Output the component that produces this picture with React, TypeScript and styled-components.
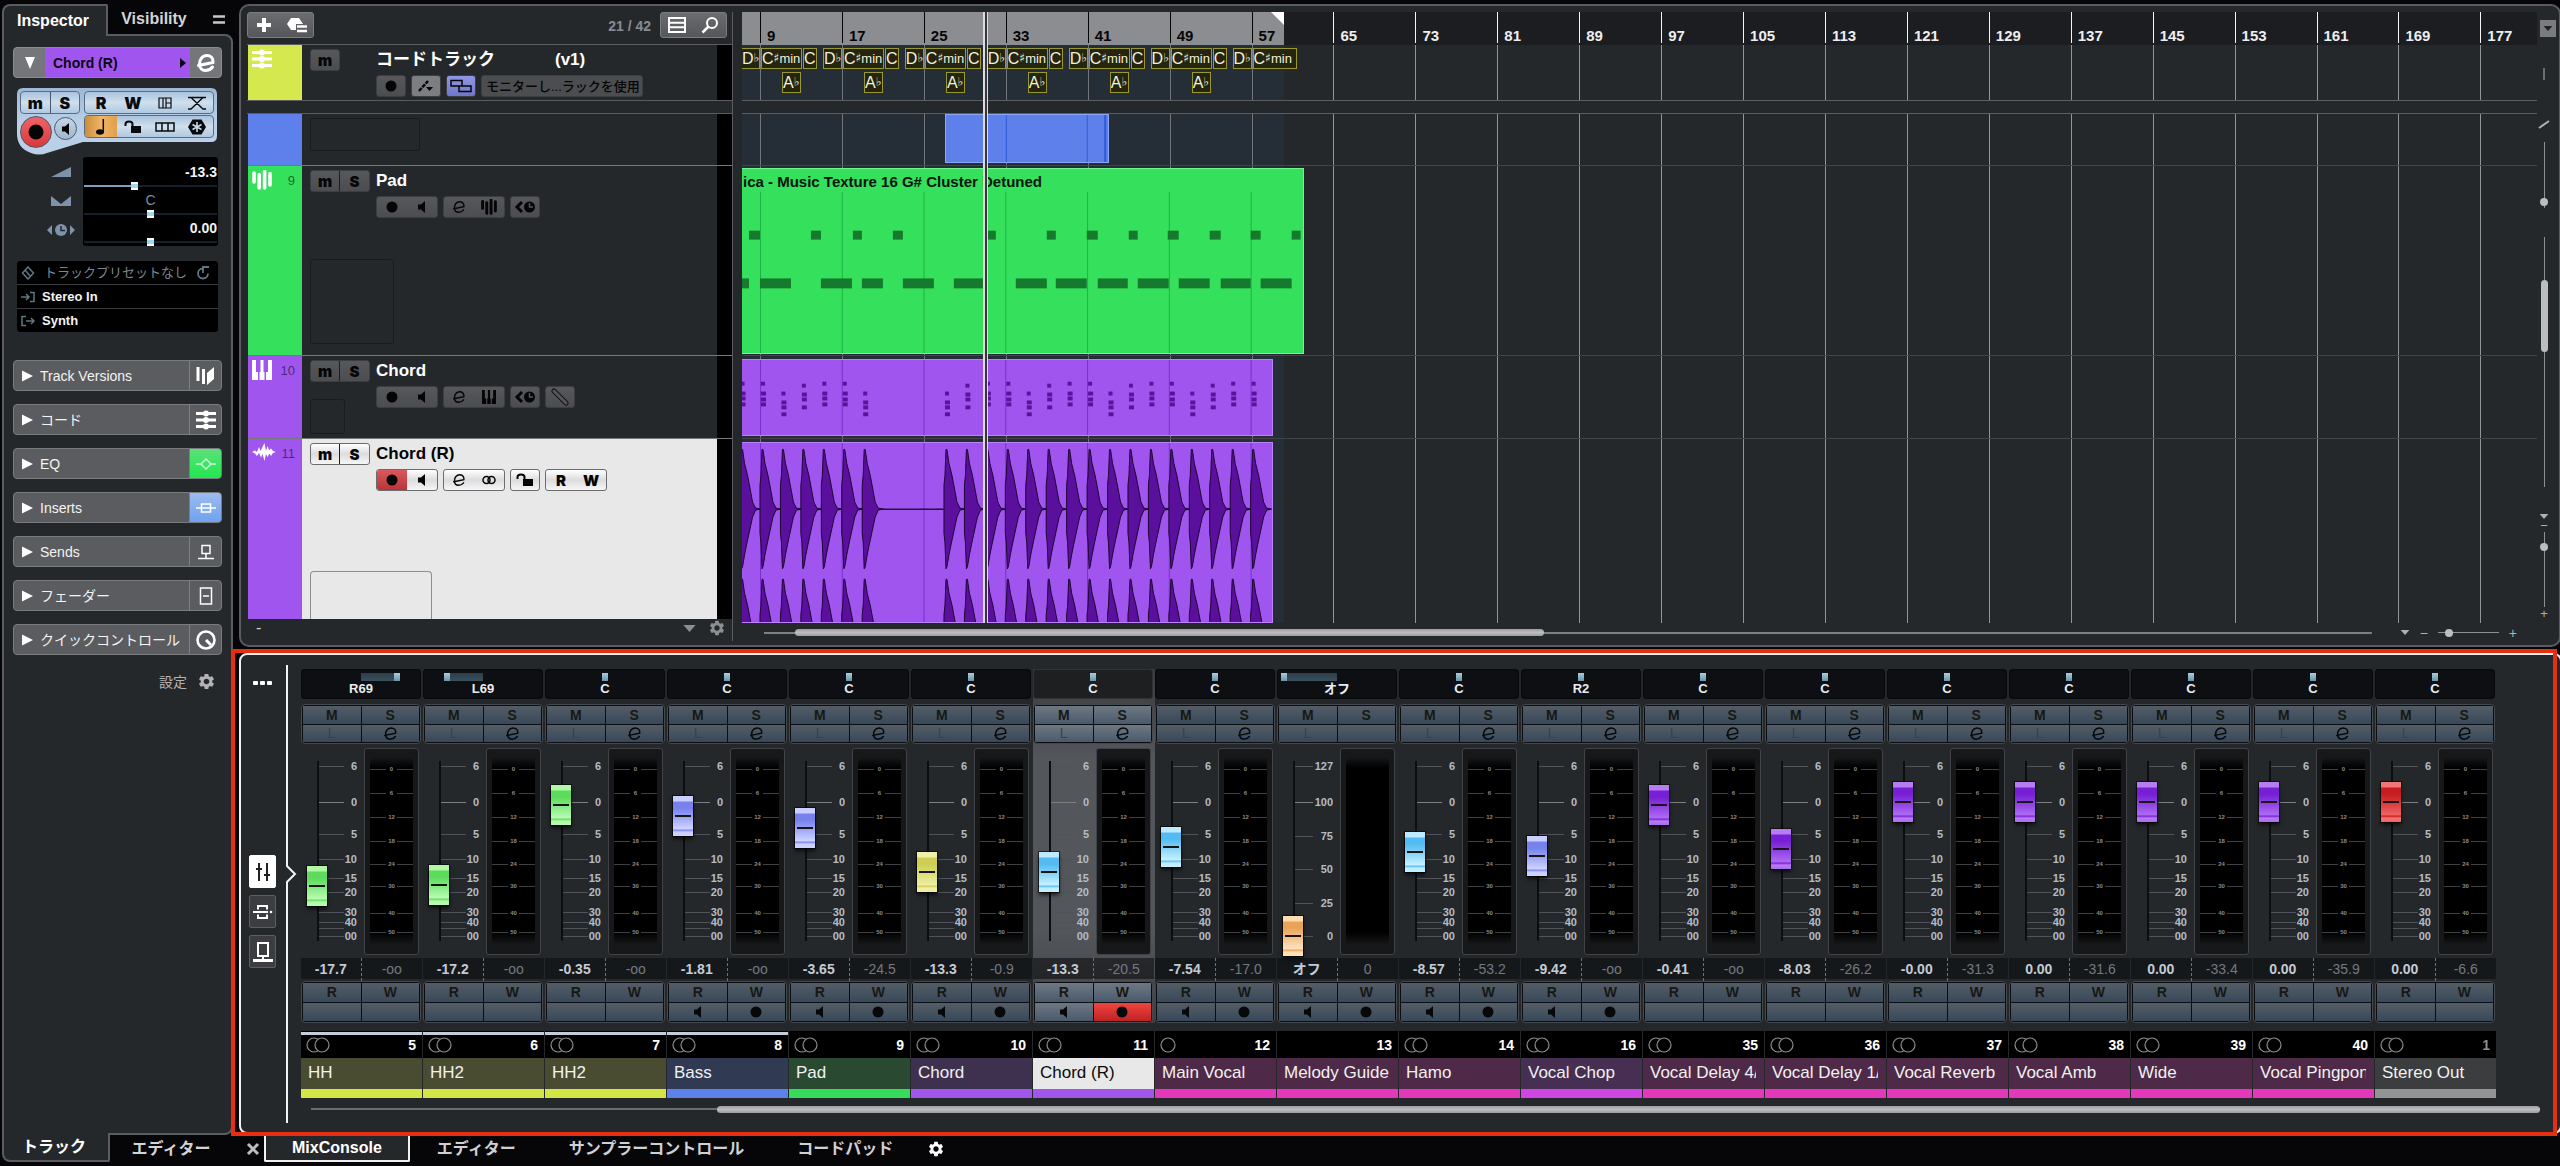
import React, { Fragment, ReactNode } from "react";
import styled, { createGlobalStyle, css } from "styled-components";
import { MdSettings } from "react-icons/md";

const SANS = '"Liberation Sans", "Noto Sans CJK JP", Arial, sans-serif';
const PANEL = "#25282b";
const EDGE = "#5b5c61";

const GlobalStyle = createGlobalStyle`
  * { box-sizing: border-box; }
  body { margin: 0; background: #060608; overflow: hidden; font-family: ${SANS}; color: #fff; }
  button, select, input { font: inherit; color: inherit; margin: 0; padding: 0; border: 0; background: none; }
  svg { display: block; flex: none; }
`;

/* ---------- icons ---------- */

type IconProps = { w?: number; h?: number; box?: string; children: ReactNode };
const Icon = ({ w = 20, h = 20, box, children }: IconProps) => (
  <svg width={w} height={h} viewBox={box ?? `0 0 ${w} ${h}`} aria-hidden="true">{children}</svg>
);
const EditIcon = ({ size = 16, weight = 2 }: { size?: number; weight?: number }) => (
  <Icon w={size} h={size} box="0 0 20 20">
    <path d="M2.5 12.5 L17 9.5 C17.5 5 14.5 2.5 11 2.5 C6.5 2.5 3.5 6.5 3.5 11 C3.5 15 6 17.5 9.5 17.5 C12.5 17.5 15 16 16.5 14" fill="none" stroke="currentColor" strokeWidth={weight} strokeLinecap="round" />
  </Icon>
);
const Dot = () => <Icon w={12} h={12}><circle cx="6" cy="6" r="5.5" fill="currentColor" /></Icon>;
const Speaker = () => (
  <Icon w={12} h={14}><path d="M2 4.5H5L9 1V13L5 9.5H2Z" fill="currentColor" /></Icon>
);
const Gear = ({ size = 18 }: { size?: number }) => <MdSettings size={size} aria-hidden="true" />;
const Keys = ({ size = 18 }: { size?: number }) => (
  <Icon w={size} h={size} box="0 0 20 20">
    <path d="M0 0H4V12H6V20H0ZM7.500 20V12H8.500V0H11.500V12H12.500V20ZM14 20V12H16V0H20V20Z" fill="currentColor" />
  </Icon>
);
const Bars = ({ size = 20 }: { size?: number }) => (
  <Icon w={size} h={size} box="0 0 20 20">
    <path d="M2 3V12M7.200 4.500V18M12.600 1.500V18M18 3.500V15" stroke="currentColor" strokeWidth="3.600" strokeLinecap="round" />
  </Icon>
);
const Padlock = () => (
  <Icon w={18} h={14}>
    <path d="M7 6H17V13H7Z" fill="currentColor" />
    <path d="M1.500 6V4C1.500 0.500 8.500 0.500 8.500 4V7" fill="none" stroke="currentColor" strokeWidth="2" />
  </Icon>
);
const Delay = () => (
  <Icon w={22} h={14}>
    <path d="M8 2L3 7L8 12" fill="none" stroke="currentColor" strokeWidth="3" />
    <circle cx="15.500" cy="7" r="5.500" fill="currentColor" />
    <path d="M15.500 3V7H19" fill="none" stroke="#56575b" strokeWidth="1.500" />
  </Icon>
);
const Linked = () => (
  <Icon w={14} h={10}>
    <circle cx="4.500" cy="5" r="3.500" fill="none" stroke="currentColor" strokeWidth="1.500" />
    <circle cx="9.500" cy="5" r="3.500" fill="none" stroke="currentColor" strokeWidth="1.500" />
  </Icon>
);
const Slide = () => (
  <Icon w={18} h={18}>
    <path d="M3 3L15 15" stroke="#111" strokeWidth="5" strokeLinecap="round" />
    <path d="M3 3L15 15" stroke="#56575b" strokeWidth="3" strokeLinecap="round" />
  </Icon>
);
const ChordGlyph = () => (
  <Icon w={20} h={20}>
    <path d="M0 3.500H20M0 10H20M0 16.500H20" stroke="#fff" strokeWidth="3" />
    <circle cx="10" cy="3.500" r="3" fill="#fff" /><circle cx="10" cy="10" r="3" fill="#fff" /><circle cx="10" cy="16.500" r="3" fill="#fff" />
  </Icon>
);
const WaveGlyph = () => (
  <Icon w={24} h={18}>
    <path d="M0 9L3 7.500L5 9L7 4L8.500 8L10 5L12.500 0L14 8L15.500 3L17 7L19 5.500L21 8L24 9L21 10L19 13L17.500 10.500L15.500 14L14 11L12.500 18L10.500 11L9 14.500L7 10L5 13L3 10.500Z" fill="#fff" />
  </Icon>
);
const Down = ({ w = 14, h = 8 }: { w?: number; h?: number }) => (
  <Icon w={w} h={h} box="0 0 14 8"><path d="M0 0H14L7 8Z" fill="currentColor" /></Icon>
);
const StereoGlyph = ({ mono }: { mono?: boolean }) => (
  <Icon w={24} h={16}>
    <circle cx="8" cy="8" r="7" fill="none" stroke="currentColor" strokeWidth="1.200" />
    {!mono && <circle cx="16" cy="8" r="7" fill="#000" stroke="currentColor" strokeWidth="1.200" />}
  </Icon>
);

/* ---------- page ---------- */

const Page = styled.div`
  display: flex;
  min-height: 100vh;
  overflow: hidden;
  line-height: 1;
`;

/* ---------- inspector ---------- */

const Inspector = styled.aside`
  display: flex;
  flex-direction: column;
  flex: none;
  width: 233px;
  padding: 4px 0 4px 2px;
`;
const TabLine = styled.div<{ $bottom?: boolean }>`
  display: flex;
  height: ${p => (p.$bottom ? 27 : 30)}px;
`;
const SideTab = styled.button<{ $active?: boolean; $bottom?: boolean; $w: number }>`
  width: ${p => p.$w}px;
  font-size: 16px;
  font-weight: 700;
  color: #d4d4d6;
  white-space: nowrap;
  ${p => p.$active && css`
    position: relative;
    padding-right: 4px;
    color: #fff;
    background: ${PANEL};
    border: 2px solid ${EDGE};
    ${p.$bottom
      ? "border-top: 0; margin-top: -2px; border-radius: 0 0 2px 8px;"
      : "border-bottom: 0; margin-bottom: -2px; border-radius: 8px 2px 0 0;"}
  `}
`;
const MenuButton = styled.button`
  display: grid;
  place-items: center;
  width: 24px;
  margin-left: 7px;
  color: #c8c8ca;
`;
const InspectorBody = styled.div`
  display: flex;
  flex-direction: column;
  flex: 1;
  padding: 11px 9px 0;
  background: ${PANEL};
  border: 2px solid ${EDGE};
  border-radius: 0 8px 8px 0;
`;
const TrackHeader = styled.div`
  display: flex;
  height: 31px;
  border: 1px solid #8b8c8f;
  border-radius: 4px;
  overflow: hidden;
  background: #757679;
`;
const HeaderCell = styled.button`
  display: grid;
  place-items: center;
  width: 31px;
`;
const HeaderName = styled.button`
  display: flex;
  flex: 1;
  align-items: center;
  justify-content: space-between;
  padding: 0 4px 0 8px;
  background: #a056ee;
  color: #0b0412;
  font-size: 14px;
  font-weight: 700;
`;
const ControlPad = styled.div`
  display: grid;
  grid-template-columns: 60px 130px;
  grid-template-rows: 23px 23px;
  gap: 1px 4px;
  align-content: start;
  height: 67px;
  margin: 10px 4px 0;
  padding: 3px;
  background: linear-gradient(#9db8d6, #b9d0e8 35px);
  clip-path: path("M6 0H194Q200 0 200 6V48Q200 54 194 54H66L30 65Q22 68 14 65Q0 60 0 46V6Q0 0 6 0Z");
`;
const PadGroup = styled.div`
  display: flex;
  border: 1px solid #5c6c80;
  border-radius: 4px;
  overflow: hidden;
  background: linear-gradient(#a9c2dc, #cfdfee 50%, #b0c8e0);
`;
const PadKey = styled.button<{ $lit?: boolean; $rule?: boolean }>`
  display: grid;
  flex: 1;
  place-items: center;
  color: #080a0d;
  font: 900 16px Inter, ${SANS};
  border-left: ${p => (p.$rule ? "1px solid #48586c" : "0")};
  background: ${p => (p.$lit ? "linear-gradient(90deg, #c98d3c, #efb566 50%, #e0a04c)" : "none")};
`;
const RoundKeys = styled.div`
  display: flex;
  gap: 2px;
  margin-top: 1px;
`;
const RoundKey = styled.button<{ $record?: boolean }>`
  display: grid;
  place-items: center;
  width: ${p => (p.$record ? 32 : 23)}px;
  height: ${p => (p.$record ? 32 : 23)}px;
  margin-top: ${p => (p.$record ? 0 : 1)}px;
  border: 1px solid #4c5b6d;
  border-radius: 50%;
  color: #050505;
  background: ${p => (p.$record ? "linear-gradient(#ee6467, #d8383d)" : "linear-gradient(#c6d6e6, #9db6d0)")};
`;
const LevelBlock = styled.div`
  display: grid;
  grid-template-columns: 1fr 135px;
  margin: 2px 4px 0;
  height: 89px;
`;
const LevelIcons = styled.div`
  display: grid;
  grid-template-rows: repeat(3, 29px);
  justify-items: center;
  align-items: center;
  padding-left: 21px;
  color: #7d93a9;
`;
const LevelScreen = styled.div`
  display: grid;
  grid-template-rows: repeat(3, 28px);
  padding: 5px 1px 0;
  background: #000;
  border-radius: 3px;
`;
const LevelRow = styled.label<{ $center?: boolean }>`
  display: flex;
  flex-direction: column;
  justify-content: space-between;
  padding-top: 3px;
  text-align: ${p => (p.$center ? "center" : "right")};
  font-size: 14px;
  font-weight: ${p => (p.$center ? 400 : 700)};
  color: ${p => (p.$center ? "#7f8d9b" : "#f2f2f2")};
`;
const Level = styled.input<{ $fill?: number }>`
  appearance: none;
  display: block;
  width: 100%;
  height: 8px;
  background: linear-gradient(90deg, #7ba0c0 ${p => p.$fill ?? 0}%, #17202a 0) center / 100% 2px no-repeat;
  &::-webkit-slider-thumb {
    appearance: none;
    width: 7px;
    height: 8px;
    background: linear-gradient(#fff 2px, #9ddcf0 2px 6px, #fff 6px);
  }
`;
const Routing = styled.div`
  display: grid;
  grid-template-rows: repeat(3, 23px);
  gap: 1px;
  margin: 15px 4px 0;
  background: linear-gradient(#3a3c40, #3a3c40) center / 100% 50px no-repeat #000;
  border-radius: 4px;
  overflow: hidden;
`;
const RouteRow = styled.button<{ $dim?: boolean }>`
  display: flex;
  align-items: center;
  gap: ${p => (p.$dim ? 9 : 7)}px;
  padding: 0 3px 0 4px;
  background: #000;
  font-size: 13px;
  font-weight: ${p => (p.$dim ? 400 : 700)};
  color: ${p => (p.$dim ? "#7d8791" : "#f4f4f4")};
  white-space: nowrap;
  > svg { color: #5d7784; }
`;
const Sections = styled.div`
  display: grid;
  grid-auto-rows: 31px;
  gap: 13px;
  margin-top: 28px;
`;
const SectionRow = styled.button`
  display: flex;
  align-items: center;
  padding-left: 8px;
  border: 1px solid #7a7b7e;
  border-radius: 4px;
  overflow: hidden;
  background: #5b5c5f;
  color: #f3f3f3;
  font-size: 14px;
  white-space: nowrap;
  > span { flex: 1; text-align: left; padding-left: 7px; }
`;
const SectionIcon = styled.i<{ $bg?: string }>`
  display: grid;
  place-items: center;
  width: 32px;
  height: 100%;
  border-left: 1px solid #7f8083;
  background: ${p => p.$bg ?? "none"};
`;
const SettingsRow = styled.button`
  display: flex;
  align-items: center;
  justify-content: flex-end;
  gap: 10px;
  margin: 17px 6px 0;
  font-size: 14px;
  color: #b3b3b5;
`;

/* ---------- main column ---------- */

const Main = styled.main`
  display: flex;
  flex-direction: column;
  flex: 1;
  min-width: 0;
  padding: 4px 0 0 6px;
`;
const Project = styled.section`
  display: flex;
  flex: 1;
  margin-right: -1px;
  padding: 6px 0 0 6px;
  background: ${PANEL};
  border: 2px solid ${EDGE};
  border-radius: 10px;
`;

/* ---------- track list ---------- */

const TrackPane = styled.div`
  display: flex;
  flex-direction: column;
  flex: none;
  width: 486px;
  margin-bottom: 4px;
  border-right: 1px solid ${EDGE};
`;
const TrackTools = styled.div`
  display: flex;
  align-items: flex-start;
  height: 33px;
  padding-right: 5px;
  border-bottom: 1px solid ${EDGE};
`;
const ToolPair = styled.div`
  display: flex;
  width: 67px;
  height: 26px;
  border: 1px solid #7b7c80;
  border-radius: 3px;
  background: linear-gradient(#6b6c70, #56575b);
  > button { display: grid; place-items: center; flex: 1; }
`;
const TrackCount = styled.span`
  margin-left: auto;
  padding: 7px 9px 0 0;
  font-size: 14px;
  font-weight: 700;
  color: #888b92;
`;
const Row = styled.div<{ $h?: number; $selected?: boolean; $line?: boolean }>`
  display: flex;
  ${p => (p.$h ? `height: ${p.$h}px;` : "flex: 1; min-height: 180px;")}
  margin-left: 1px;
  border-bottom: ${p => (p.$line ? "1px solid #77787b" : "0")};
  background: linear-gradient(#000, #000) right / 15px 100% no-repeat ${p => (p.$selected ? "#e8e8e8" : PANEL)};
`;
const ColorTab = styled.div<{ $c: string }>`
  display: flex;
  flex: none;
  justify-content: space-between;
  align-items: flex-start;
  width: 54px;
  padding: 4px 7px 0 4px;
  background: ${p => p.$c};
  font-size: 13px;
  color: rgba(0, 0, 0, 0.55);
  > span { padding-top: 4px; }
  > svg { color: #fff; }
`;
const RowLeft = styled.div`
  display: flex;
  flex-direction: column;
  justify-content: space-between;
  align-items: flex-start;
  flex: none;
  width: 74px;
  padding: 4px 0 0 8px;
`;
const RowRight = styled.div`
  padding: 4px 0 0;
`;
const RowTitle = styled.div<{ $dark?: boolean }>`
  display: flex;
  align-items: center;
  gap: 60px;
  height: 21px;
  margin-bottom: 5px;
  font-size: 17px;
  font-weight: 700;
  white-space: nowrap;
  color: ${p => (p.$dark ? "#050505" : "#fff")};
`;
const RowTools = styled.div`
  display: flex;
  gap: 5px;
`;
const Cluster = styled.div<{ $light?: boolean; $blue?: boolean; $bright?: boolean }>`
  display: flex;
  flex: none;
  height: 22px;
  border: 1px solid ${p => (p.$light ? "#6c6c6e" : "#3c3e41")};
  border-radius: 3px;
  overflow: hidden;
  background: ${p =>
    p.$light ? "linear-gradient(#fff, #dcdcdf 50%, #f6f6f6)"
    : p.$blue ? "linear-gradient(#9196e6, #6f76c8)"
    : p.$bright ? "#7d7e81"
    : "linear-gradient(#57585c, #4c4d51)"};
`;
const Key = styled.button<{ $rec?: boolean; $rule?: boolean; $narrow?: boolean }>`
  display: grid;
  place-items: center;
  width: ${p => (p.$narrow ? 28 : 30)}px;
  color: #050505;
  font: 900 15px Inter, ${SANS};
  border-left: ${p => (p.$rule ? "1px solid #1d1e20" : "0")};
  background: ${p => (p.$rec ? "linear-gradient(#d9595c, #b93438)" : "none")};
`;
const MonitorSelect = styled.select`
  appearance: none;
  flex: none;
  width: 162px;
  height: 22px;
  padding: 0 0 0 4px;
  border: 1px solid #3c3e41;
  border-radius: 3px;
  background: #4c4d51;
  color: #050505;
  font-size: 13px;
  font-weight: 500;
`;
const Thumbnail = styled.div<{ $w: number; $h: number; $gap: number; $light?: boolean }>`
  width: ${p => p.$w}px;
  height: ${p => p.$h}px;
  margin-bottom: ${p => p.$gap}px;
  border: 1px solid ${p => (p.$light ? "#8e8e90" : "#191b1d")};
  border-radius: ${p => (p.$light ? "4px 4px 0 0" : "3px")};
  ${p => p.$light && "border-bottom: 0;"}
`;
const Split = styled.div`
  height: 14px;
  border: 1px solid ${EDGE};
  border-width: 1px 0;
`;
const TrackFoot = styled.div`
  display: flex;
  align-items: center;
  gap: 12px;
  height: 22px;
  padding: 0 6px 4px 9px;
  color: #8d8e91;
  > span { margin-right: auto; color: #d0d0d2; }
`;

/* ---------- timeline ---------- */

const Timeline = styled.div`
  display: flex;
  flex-direction: column;
  flex: 1;
  min-width: 0;
  margin-left: 9px;
`;
const Canvas = styled.div`
  position: relative;
  display: flex;
  flex-direction: column;
  flex: 1;
  overflow: hidden;
`;
const Ruler = styled.div`
  position: relative;
  height: 33px;
  background: #1b1d21;
`;
const Range = styled.div<{ $ruler?: boolean }>`
  position: absolute;
  inset: 0 auto 0 0;
  background: ${p => (p.$ruler ? "#8c8d91" : "#252d36")};
`;
const RangeEnd = styled.i`
  position: absolute;
  top: 0;
  right: 0;
  border-top: 13px solid #fff;
  border-left: 13px solid transparent;
`;
const BarMark = styled.span<{ $dark: boolean }>`
  position: absolute;
  top: 0;
  height: 31px;
  padding: 16px 0 0 6px;
  border-left: 1px solid ${p => (p.$dark ? "#050505" : "#f5f5f5")};
  color: ${p => (p.$dark ? "#050505" : "#eeeeee")};
  font-size: 15px;
  font-weight: 700;
`;
const Lane = styled.div<{ $h?: number; $line?: boolean }>`
  position: relative;
  ${p => (p.$h ? `height: ${p.$h}px;` : "flex: 1; min-height: 180px;")}
  border-bottom: ${p => (p.$line ? "1px solid #424447" : "0")};
`;
const GridLine = styled.i<{ $in: boolean }>`
  position: absolute;
  top: 0;
  bottom: 0;
  width: 1px;
  background: ${p => (p.$in ? "#72757a" : "#939496")};
`;
const Clip = styled.div<{ $c: string; $hi: string; $top: number; $bottom: number; $open?: boolean }>`
  position: absolute;
  top: ${p => p.$top}px;
  bottom: ${p => p.$bottom}px;
  overflow: hidden;
  background: ${p => p.$c};
  border: 1px solid ${p => p.$hi};
  ${p => p.$open && "border-left: 0;"}
  > svg { width: 100%; height: 100%; }
`;
const ClipTitle = styled.span`
  position: absolute;
  top: 5px;
  left: 1px;
  font-size: 15px;
  font-weight: 700;
  color: #04140a;
  white-space: nowrap;
`;
const ChordTag = styled.span<{ $row: number }>`
  position: absolute;
  top: ${p => (p.$row ? 27 : 3)}px;
  display: flex;
  height: 21px;
  overflow: hidden;
  white-space: nowrap;
  border: 1px solid #98982c;
  background: #24240f;
  color: #f1f1dc;
  font-size: 16px;
  line-height: 19px;
  > sub { font: 12px/19px "DejaVu Sans", sans-serif; }
  > small { font-size: 13px; line-height: 20px; }
`;
const Playhead = styled.i`
  position: absolute;
  top: 0;
  bottom: 0;
  width: 5px;
  border: solid #dcdcdc;
  border-width: 0 1px 0 2px;
  background: #3a3540;
`;
const TimelineFoot = styled.div`
  display: flex;
  align-items: center;
  height: 22px;
  padding: 0 20px 3px 22px;
  gap: 10px;
  color: #b0b0b2;
  font-size: 14px;
`;
const FootTools = styled.div`
  display: flex;
  align-items: center;
  gap: 10px;
  margin-left: 18px;
`;
const ScrollTrack = styled.div<{ $line: string }>`
  flex: 1;
  height: 7px;
  background: linear-gradient(${p => p.$line}, ${p => p.$line}) center / 100% 2px no-repeat;
`;
const ScrollThumb = styled.div`
  height: 7px;
  border-radius: 4px;
  background: linear-gradient(#9d9c9e, #bdbcbe 50%, #9d9c9e);
`;
const roundThumb = css`
  &::-webkit-slider-thumb {
    appearance: none;
    width: 8px;
    height: 8px;
    border-radius: 50%;
    background: #bdbcbe;
  }
`;
const ZoomX = styled.input`
  appearance: none;
  width: 61px;
  height: 8px;
  background: linear-gradient(#8f8f91, #8f8f91) center / 100% 1px no-repeat;
  ${roundThumb}
`;
const ZoomPane = styled.div`
  display: flex;
  flex-direction: column;
  align-items: center;
  flex: none;
  width: 22px;
  padding: 8px 8px 25px 0;
  color: #b0b0b2;
  font-size: 13px;
`;
const ZoomMenu = styled.button`
  display: grid;
  place-items: center;
  width: 16px;
  height: 17px;
  margin-left: 8px;
  background: #7b7c7f;
  color: #222;
`;
const Mark = styled.svg`
  width: 12px;
  height: 105px;
`;
const ZoomY = styled.input<{ $h: number }>`
  appearance: none;
  writing-mode: vertical-lr;
  direction: rtl;
  flex: none;
  width: 8px;
  height: ${p => p.$h}px;
  background: linear-gradient(#8f8f91, #8f8f91) center / 1px 100% no-repeat;
  ${roundThumb}
`;
const ScrollY = styled.div`
  flex: 1;
  width: 7px;
  margin: 29px 0 27px;
  padding-top: 43px;
  background: linear-gradient(#8f8f91, #8f8f91) center / 1px 100% no-repeat;
  &::before {
    content: "";
    display: block;
    height: 72px;
    border-radius: 4px;
    background: #bdbcbe;
  }
`;

/* ---------- mixer ---------- */

const MixerWrap = styled.div`
  position: relative;
  margin-top: 6px;
`;
const Highlight = styled.i`
  position: absolute;
  inset: -4px 3px -2px -8px;
  border: 4px solid #e62e10;
  pointer-events: none;
`;
const Mixer = styled.section`
  display: flex;
  margin-right: -2px;
  background: ${PANEL};
  border: 2px solid #f1f1f1;
  border-radius: 8px;
`;
const MixerSide = styled.nav`
  position: relative;
  display: flex;
  flex-direction: column;
  align-items: center;
  gap: 7px;
  flex: none;
  width: 47px;
  margin: 10px 0 9px;
  padding-right: 2px;
  border-right: 2px solid #f2f2f2;
`;
const MoreDots = styled.button`
  display: flex;
  gap: 2px;
  margin: 16px 0 163px;
  > i { width: 5px; height: 4px; background: #fff; border-radius: 1px; }
`;
const ViewButton = styled.button<{ $on?: boolean }>`
  display: grid;
  place-items: center;
  width: 27px;
  height: 33px;
  border: 1px solid ${p => (p.$on ? "#fff" : "#5c5e62")};
  border-radius: 2px;
  background: ${p => (p.$on ? "#fff" : "#3b3d41")};
  color: ${p => (p.$on ? "#222" : "#fff")};
`;
const Notch = styled.div`
  position: absolute;
  left: 45px;
  top: 199px;
  background: ${PANEL};
`;
const MixerBody = styled.div`
  flex: 1;
  min-width: 0;
  padding: 14px 0 0 13px;
`;
const Strips = styled.div`
  display: flex;
  overflow: hidden;
`;
const Strip = styled.article<{ $on?: boolean }>`
  flex: none;
  width: 122px;
  padding-right: 1px;
  background: ${p => (p.$on ? "linear-gradient(#393b3e, #53565b 90px, #53565b 260px, #3d3f43 354px, transparent 354px)" : "none")};
`;
const Pan = styled.div<{ $on?: boolean }>`
  height: 30px;
  padding-top: 3px;
  margin: 0 1px 5px 0;
  border: 1px solid ${p => (p.$on ? "#303235" : "#08090a")};
  border-radius: 3px;
  background: ${p => (p.$on ? "#1d1f21" : "#0d0f12")};
  color: #e9ecf0;
  text-align: center;
  font-size: 13px;
  font-weight: 700;
`;
const PanFill = styled.div<{ $side: string }>`
  height: 8px;
  margin-bottom: 1px;
  background:
    linear-gradient(#a5cfe0, #6c94a8) ${p => (p.$side === "L" ? "left" : "right")} / 6px 100% no-repeat,
    linear-gradient(#2b3d47, #3a515d);
`;
const Keypad = styled.div<{ $h: number }>`
  display: grid;
  grid-template-columns: 1fr 1fr;
  grid-template-rows: 1fr 1fr;
  gap: 1px;
  height: ${p => p.$h}px;
  margin-right: 1px;
  padding: 1px;
  border: 1px solid #45484c;
  border-radius: 4px;
  background: #0b0d10;
`;
const PadCell = styled.button<{ $dim?: boolean; $rec?: boolean; $on?: boolean }>`
  display: grid;
  place-items: center;
  background: ${p =>
    p.$rec ? "linear-gradient(#f0453f, #bf2225)" : p.$on ? "linear-gradient(#6e7884, #4a5a6b)" : "linear-gradient(#545d66, #38485a)"};
  color: ${p => (p.$dim ? "#3a4249" : "#171812")};
  font-size: 14px;
  font-weight: ${p => (p.$dim ? 400 : 700)};
  > svg { color: #06080a; }
`;
const FaderArea = styled.div`
  display: grid;
  grid-template-columns: 63px 55px;
  height: 214px;
  > * { grid-row: 1; }
`;
const Scale = styled.svg`
  grid-column: 1;
  font: 700 11px ${SANS};
  fill: #b4bcc5;
`;
const knobs: Record<string, [string, string, string]> = {
  green: ["#b0f8a5", "#5cdb5c", "#b8fbb2"],
  blue: ["#c9ceff", "#7681ee", "#ced4ff"],
  yellow: ["#efefa6", "#cfce52", "#eeeea6"],
  cyan: ["#bdeaff", "#53bbf1", "#c6f2ff"],
  orange: ["#ffdcae", "#e9a358", "#ffe3c0"],
  purple: ["#b87cf2", "#761fd4", "#ad6af5"],
  red: ["#f27474", "#c71c20", "#f26262"],
};
const Fader = styled.input<{ $k: string }>`
  appearance: none;
  writing-mode: vertical-lr;
  direction: rtl;
  grid-column: 1;
  width: 20px;
  height: 210px;
  margin: 2px 0 0 6px;
  background: linear-gradient(#0c0d0e, #0c0d0e) 10px 15px / 2px 180px no-repeat;
  &::-webkit-slider-thumb {
    appearance: none;
    width: 20px;
    height: 40px;
    box-shadow: 0 0 0 1px rgba(0, 0, 0, 0.6), 0 3px 4px rgba(0, 0, 0, 0.7);
    background:
      linear-gradient(#161616, #161616) center / 16px 2px no-repeat,
      linear-gradient(${p => {
        const [a, b, c] = knobs[p.$k];
        return `${a} 5px, ${b} 6px, ${b} 12px, ${c} 33px, ${b} 34px, ${a} 36px, ${c} 40px`;
      }});
  }
`;
const Meter = styled.svg`
  grid-column: 2;
  margin-top: 4px;
  border: 1px solid #414347;
  border-radius: 3px;
  background: #17181a;
  font: 700 6px ${SANS};
  fill: #8a8b8d;
`;
const Values = styled.div`
  display: grid;
  grid-template-columns: 1fr 1fr;
  height: 21px;
  margin-bottom: 2px;
  background: rgba(12, 14, 17, 0.6);
  line-height: 23px;
  text-align: center;
  font-size: 14px;
`;
const Gain = styled.output`
  font-weight: 700;
  color: #c3cbd4;
  border-right: 1px dashed #6d7177;
`;
const Peak = styled.output`
  color: #74797f;
`;
const StripHead = styled.div<{ $folder?: boolean; $grey?: boolean }>`
  display: flex;
  align-items: center;
  justify-content: space-between;
  height: 27px;
  margin-top: 8px;
  padding: 0 6px 0 5px;
  background: ${p => (p.$folder ? "linear-gradient(#000 1px, #c5ced8 1px 4px, #000 4px)" : "#000")};
  font-size: 14px;
  font-weight: 700;
  color: ${p => (p.$grey ? "#8d8e90" : "#fff")};
  > svg { color: #8e8e90; }
  > span { margin-left: auto; }
`;
const StripName = styled.div<{ $bg: string; $c: string; $on?: boolean }>`
  height: 40px;
  padding: 6px 8px 0 7px;
  background: ${p => p.$bg};
  border-bottom: 9px solid ${p => p.$c};
  color: ${p => (p.$on ? "#0a0a0a" : "#f1f1f1")};
  font-size: 17px;
  > span { display: block; overflow: hidden; white-space: nowrap; height: 20px; }
`;
const MixerScroll = styled.div`
  display: flex;
  align-items: center;
  height: 34px;
  padding: 0 20px 12px 10px;
`;
const LowerTabs = styled.div`
  display: flex;
  align-items: flex-start;
  gap: 1px;
  height: 32px;
  padding: 2px 0 0 3px;
  > button { height: 26px; }
`;
const CloseTab = styled.button<{ $far?: boolean }>`
  display: grid;
  place-items: center;
  width: 21px;
  margin-left: ${p => (p.$far ? 5 : 0)}px;
`;
const LowerTab = styled.button<{ $active?: boolean }>`
  padding: 0 26px;
  font-size: 16px;
  font-weight: 700;
  color: ${p => (p.$active ? "#fff" : "#d0d0d2")};
  border: ${p => (p.$active ? "2px solid #f1f1f1" : "0")};
  border-top: 0;
  border-radius: 0 0 2px 2px;
  background: ${p => (p.$active ? PANEL : "none")};
  white-space: nowrap;
`;

/* ---------- data ---------- */

const VIEW = 1793;
const at = (x: number) => `${(x / VIEW) * 100}%`;
const BAR8 = 81.83;
const bars = Array.from({ length: 22 }, (_, i) => ({ n: 9 + i * 8, x: 18 + i * BAR8 }));
const RANGE_END = 541;

const padHigh = [[7, 18], [69, 79], [111, 120], [151, 161], [244, 254], [305, 314], [345, 356], [387, 396], [426, 437], [468, 479], [509, 519], [550, 559]];
const padLow = [[0, 7], [18, 49], [79, 110], [120, 141], [161, 192], [212, 242], [274, 305], [314, 345], [356, 386], [396, 427], [437, 468], [479, 509], [519, 550]];
const voicings = [[24, 34, 40, 45], [34, 43, 48, 55], [26, 35, 40, 48], [24, 34, 39, 45]];
const hits = [...Array(6).keys(), ...Array.from({ length: 16 }, (_, i) => i + 9)];
const hitX = (i: number) => 21 + i * 20.46;

const ClipLines = ({ from, to, h, y = 0, c }: { from: number; to: number; h: number; y?: number; c: string }) => (
  <>{bars.filter(b => b.x > from && b.x < to).map(b => <rect key={b.n} x={b.x - from} y={y} width="1" height={h} fill={c} />)}</>
);

const Grid = () => (
  <>
    <Range style={{ width: at(RANGE_END) }} />
    {bars.map(b => <GridLine key={b.n} $in={b.x < RANGE_END} style={{ left: at(b.x) }} />)}
  </>
);

const spike = (x: number, cy: number) => {
  const up = [[0, -60], [1, -60], [3, -46], [6, -34], [9, -18], [11, -7], [14, -1], [19, 0]];
  const down = [[14, 1], [11, 8], [8, 22], [5, 36], [3, 46], [1, 58], [0, 60], [-1, 34], [-2, 24], [-2, -24], [-1, -34]];
  return "M" + [...up, ...down].map(([a, b]) => `${x + a} ${cy + b}`).join("L") + "Z";
};

type Channel = {
  n: number; name: string; pan: string; panAt?: [number, number]; knob: string; y: number;
  gain: string; peak: string; hue: string; folder?: boolean; rec?: boolean; on?: boolean; mono?: boolean; midi?: boolean;
};
const hues: Record<string, [string, string]> = {
  lime: ["#4a4c31", "#d4e645"],
  blue: ["#303a53", "#5d80ea"],
  green: ["#294a31", "#35dc5c"],
  violet: ["#3e304f", "#a056ea"],
  white: ["#e8e8e8", "#a056ea"],
  pink: ["#4f2a48", "#e338b9"],
  orchid: ["#462f53", "#cf47e3"],
  grey: ["#3b3d3f", "#939496"],
};
const channels: Channel[] = [
  { n: 5, name: "HH", pan: "R69", panAt: [60, 99], knob: "green", y: 886, gain: "-17.7", peak: "-oo", hue: "lime", folder: true },
  { n: 6, name: "HH2", pan: "L69", panAt: [21, 60], knob: "green", y: 885, gain: "-17.2", peak: "-oo", hue: "lime", folder: true },
  { n: 7, name: "HH2", pan: "C", knob: "green", y: 805, gain: "-0.35", peak: "-oo", hue: "lime", folder: true },
  { n: 8, name: "Bass", pan: "C", knob: "blue", y: 816, gain: "-1.81", peak: "-oo", hue: "blue", folder: true, rec: true },
  { n: 9, name: "Pad", pan: "C", knob: "blue", y: 828, gain: "-3.65", peak: "-24.5", hue: "green", rec: true },
  { n: 10, name: "Chord", pan: "C", knob: "yellow", y: 872, gain: "-13.3", peak: "-0.9", hue: "violet", rec: true },
  { n: 11, name: "Chord (R)", pan: "C", knob: "cyan", y: 872, gain: "-13.3", peak: "-20.5", hue: "white", rec: true, on: true },
  { n: 12, name: "Main Vocal", pan: "C", knob: "cyan", y: 847, gain: "-7.54", peak: "-17.0", hue: "pink", rec: true, mono: true },
  { n: 13, name: "Melody Guide", pan: "オフ", panAt: [4, 60], knob: "orange", y: 936, gain: "オフ", peak: "0", hue: "pink", rec: true, midi: true },
  { n: 14, name: "Hamo", pan: "C", knob: "cyan", y: 852, gain: "-8.57", peak: "-53.2", hue: "pink", rec: true },
  { n: 16, name: "Vocal Chop", pan: "R2", knob: "blue", y: 856, gain: "-9.42", peak: "-oo", hue: "orchid", rec: true },
  { n: 35, name: "Vocal Delay 4/4", pan: "C", knob: "purple", y: 805, gain: "-0.41", peak: "-oo", hue: "pink" },
  { n: 36, name: "Vocal Delay 1/8", pan: "C", knob: "purple", y: 849, gain: "-8.03", peak: "-26.2", hue: "pink" },
  { n: 37, name: "Vocal Reverb", pan: "C", knob: "purple", y: 802, gain: "-0.00", peak: "-31.3", hue: "pink" },
  { n: 38, name: "Vocal Amb", pan: "C", knob: "purple", y: 802, gain: "0.00", peak: "-31.6", hue: "pink" },
  { n: 39, name: "Wide", pan: "C", knob: "purple", y: 802, gain: "0.00", peak: "-33.4", hue: "pink" },
  { n: 40, name: "Vocal Pingpong", pan: "C", knob: "purple", y: 802, gain: "0.00", peak: "-35.9", hue: "pink" },
  { n: 1, name: "Stereo Out", pan: "C", knob: "red", y: 802, gain: "0.00", peak: "-6.6", hue: "grey" },
];
const dbScale: [string, number][] = [["6", 22], ["0", 58], ["5", 90], ["10", 115], ["15", 134], ["20", 148], ["30", 168], ["40", 178], ["", 184], ["00", 192]];
const midiScale: [string, number][] = [["127", 22], ["100", 58], ["75", 92], ["50", 125], ["25", 159], ["0", 192]];
const meterScale: [string, number][] = [["0", 20], ["6", 44], ["12", 68], ["18", 92], ["24", 115], ["30", 137], ["40", 164], ["50", 183]];

/* ---------- pieces ---------- */

const ChannelStrip = ({ c }: { c: Channel }) => {
  const [from, to] = c.panAt ?? [57, 63];
  return (
    <Strip $on={c.on}>
      <Pan $on={c.on}>
        <PanFill $side={from < 50 ? "L" : "R"} style={{ marginLeft: from - 1, width: to - from }} />
        {c.pan}
      </Pan>
      <Keypad $h={40}>
        <PadCell $on={c.on}>M</PadCell>
        <PadCell $on={c.on}>S</PadCell>
        <PadCell $on={c.on} $dim>L</PadCell>
        <PadCell $on={c.on} aria-label="Edit channel">{!c.midi && <EditIcon size={15} />}</PadCell>
      </Keypad>
      <FaderArea>
        <Scale width="63" height="214">
          {(c.midi ? midiScale : dbScale).map(([t, y]) => (
            <Fragment key={y}>
              <rect x="18" y={y} width={c.midi ? 18 : 25} height="1" fill={y === 58 ? "#7d8083" : "#505357"} />
              <text x="56" y={y + 4} textAnchor="end">{t}</text>
            </Fragment>
          ))}
        </Scale>
        <Fader type="range" min={0} max={170} defaultValue={936 - c.y} $k={c.knob} aria-label={`${c.name} level`} />
        <Meter width="55" height="207" viewBox="0 0 53 205">
          <defs>
            <linearGradient id="well" x1="0" y1="0" x2="0" y2="1">
              <stop offset="0" stopColor="#17181a" /><stop offset="0.06" stopColor="#000" />
              <stop offset="0.93" stopColor="#000" /><stop offset="1" stopColor="#17181a" />
            </linearGradient>
          </defs>
          <rect x="5" y="8" width="43" height="188" fill="url(#well)" />
          {!c.midi && meterScale.map(([t, y]) => (
            <Fragment key={t}>
              <path d={`M5 ${y}.5H21M32 ${y}.5H48`} stroke="#3f4042" />
              <text x="26.500" y={y + 2} textAnchor="middle">{t}</text>
            </Fragment>
          ))}
        </Meter>
      </FaderArea>
      <Values><Gain>{c.gain}</Gain><Peak>{c.peak}</Peak></Values>
      <Keypad $h={42}>
        <PadCell $on={c.on}>R</PadCell>
        <PadCell $on={c.on}>W</PadCell>
        <PadCell $on={c.on} aria-label="Monitor">{c.rec && <Speaker />}</PadCell>
        <PadCell $on={c.on} $rec={c.on} aria-label="Record enable">{c.rec && <Dot />}</PadCell>
      </Keypad>
      <StripHead $folder={c.folder} $grey={c.n === 1}>
        {!c.midi && <StereoGlyph mono={c.mono} />}
        <span>{c.n}</span>
      </StripHead>
      <StripName $bg={hues[c.hue][0]} $c={hues[c.hue][1]} $on={c.on}><span>{c.name}</span></StripName>
    </Strip>
  );
};

const MuteSolo = ({ light }: { light?: boolean }) => (
  <Cluster $light={light}><Key $narrow>m</Key><Key $rule>S</Key></Cluster>
);

const sections: [string, ReactNode, string?][] = [
  ["Track Versions", <Icon w={20} h={20}><path d="M2 1V15M7.500 3V18" stroke="#fff" strokeWidth="3" /><path d="M11 7L18 1V13L11 19Z" fill="#fff" /></Icon>],
  ["コード", <ChordGlyph />],
  ["EQ", <Icon w={20} h={14}><path d="M0 7H5.500M14.500 7H20M10 2L15 7L10 12L5 7Z" fill="none" stroke="#c9fbd2" strokeWidth="1.500" /></Icon>, "linear-gradient(#5de07c, #1fe84c)"],
  ["Inserts", <Icon w={20} h={14}><path d="M0 7H20M5.500 3H14.500V11H5.500Z" fill="none" stroke="#fff" strokeWidth="1.500" /></Icon>, "linear-gradient(#9dbbee, #6fa2f2)"],
  ["Sends", <Icon w={16} h={16}><path d="M4 1.500H12V9.500H4ZM8 9.500V14.500M0 14.500H16" fill="none" stroke="#fff" strokeWidth="1.500" /></Icon>],
  ["フェーダー", <Icon w={14} h={18}><path d="M1.500 1H12.500V17H1.500ZM4 9H10" fill="none" stroke="#fff" strokeWidth="1.500" /></Icon>],
  ["クイックコントロール", <Icon w={20} h={20}><circle cx="10" cy="10" r="8.500" fill="none" stroke="#fff" strokeWidth="2.600" /><path d="M10 10L15 15" stroke="#fff" strokeWidth="3" /></Icon>],
];

const Play = () => <Icon w={11} h={12}><path d="M0 0.500L11 6L0 11.500Z" fill="#fff" /></Icon>;

const InspectorPanel = () => (
  <Inspector>
    <TabLine>
      <SideTab $active $w={106}>Inspector</SideTab>
      <SideTab $w={92}>Visibility</SideTab>
      <MenuButton aria-label="Menu"><Icon w={12} h={9}><path d="M0 1.500H12M0 7.500H12" stroke="currentColor" strokeWidth="2.500" /></Icon></MenuButton>
    </TabLine>
    <InspectorBody>
      <TrackHeader>
        <HeaderCell aria-label="Collapse"><Icon w={10} h={12}><path d="M0 0H10L5 12Z" fill="#fff" /></Icon></HeaderCell>
        <HeaderName>Chord (R)<Icon w={6} h={10}><path d="M0 0L6 5L0 10Z" fill="#0b0412" /></Icon></HeaderName>
        <HeaderCell aria-label="Edit channel"><EditIcon size={20} weight={3} /></HeaderCell>
      </TrackHeader>
      <ControlPad>
        <PadGroup><PadKey>m</PadKey><PadKey $rule>S</PadKey></PadGroup>
        <PadGroup>
          <PadKey>R</PadKey><PadKey>W</PadKey>
          <PadKey aria-label="Lanes"><Icon w={14} h={12}><path d="M1 1H13V11H1ZM5 1V11M8 1V11M8 6H13" fill="none" stroke="currentColor" strokeWidth="1.200" /></Icon></PadKey>
          <PadKey aria-label="Crossfade"><Icon w={18} h={14}><path d="M0 1.500H3L15 13H18M0 13H3L15 1.500H18M3 1.500H15" fill="none" stroke="currentColor" strokeWidth="1.300" /></Icon></PadKey>
        </PadGroup>
        <RoundKeys>
          <RoundKey $record aria-label="Record"><Icon w={16} h={16}><circle cx="8" cy="8" r="7.500" fill="currentColor" /></Icon></RoundKey>
          <RoundKey aria-label="Monitor"><Speaker /></RoundKey>
        </RoundKeys>
        <PadGroup>
          <PadKey $lit aria-label="Musical mode"><Icon w={10} h={16}><ellipse cx="4" cy="13" rx="4" ry="2.800" fill="currentColor" /><path d="M7.300 13V0" stroke="currentColor" strokeWidth="1.500" /></Icon></PadKey>
          <PadKey aria-label="Lock"><Padlock /></PadKey>
          <PadKey aria-label="Lanes view"><Icon w={20} h={10}><path d="M1 1H19V9H1ZM7 1V9M13 1V9" fill="none" stroke="currentColor" strokeWidth="1.500" /></Icon></PadKey>
          <PadKey aria-label="Freeze"><Icon w={18} h={16}><path d="M4.500 0.500H13.500L18 8L13.500 15.500H4.500L0 8Z" fill="currentColor" /><path d="M9 3V13M4.500 5.500L13.500 10.500M13.500 5.500L4.500 10.500" stroke="#c8d9ea" strokeWidth="1.600" /></Icon></PadKey>
        </PadGroup>
      </ControlPad>
      <LevelBlock>
        <LevelIcons>
          <Icon w={20} h={10}><path d="M0 10L20 0V10Z" fill="currentColor" /></Icon>
          <Icon w={20} h={10}><path d="M0 0L10 8L20 0V10H0Z" fill="currentColor" /></Icon>
          <Icon w={28} h={12}><path d="M5 1V11L0 6ZM23 1V11L28 6Z" fill="currentColor" /><circle cx="14" cy="6" r="6" fill="currentColor" /><path d="M14 2V6.500H18" fill="none" stroke={PANEL} strokeWidth="1.500" /></Icon>
        </LevelIcons>
        <LevelScreen>
          <LevelRow>-13.3<Level type="range" $fill={37} min={0} max={100} defaultValue={37} aria-label="Volume" /></LevelRow>
          <LevelRow $center>C<Level type="range" min={0} max={100} defaultValue={50} aria-label="Pan" /></LevelRow>
          <LevelRow>0.00<Level type="range" min={0} max={100} defaultValue={50} aria-label="Delay" /></LevelRow>
        </LevelScreen>
      </LevelBlock>
      <Routing>
        <RouteRow $dim>
          <Icon w={14} h={14}><path d="M7 1L12.500 7L7 13L1.500 7ZM4 4L9.500 10.500" fill="none" stroke="currentColor" strokeWidth="1.500" /></Icon>
          トラックプリセットなし
          <Icon w={14} h={14}><path d="M7 2.500A5 5 0 1 0 12 7.500M7 7V1H13" fill="none" stroke="currentColor" strokeWidth="1.800" /></Icon>
        </RouteRow>
        <RouteRow><Icon w={14} h={12}><path d="M0 6H8M5 3L8 6L5 9M9 1.500H13V10.500H9" fill="none" stroke="currentColor" strokeWidth="1.500" /></Icon>Stereo In</RouteRow>
        <RouteRow><Icon w={14} h={12}><path d="M5 1.500H1V10.500H5M5 6H13M10 3L13 6L10 9" fill="none" stroke="currentColor" strokeWidth="1.500" /></Icon>Synth</RouteRow>
      </Routing>
      <Sections>
        {sections.map(([label, icon, bg]) => (
          <SectionRow key={label}><Play /><span>{label}</span><SectionIcon $bg={bg}>{icon}</SectionIcon></SectionRow>
        ))}
      </Sections>
      <SettingsRow>設定<Gear size={19} /></SettingsRow>
    </InspectorBody>
    <TabLine $bottom>
      <SideTab $active $bottom $w={108}>トラック</SideTab>
      <SideTab $bottom $w={122}>エディター</SideTab>
    </TabLine>
  </Inspector>
);

const TrackList = () => (
  <TrackPane>
    <TrackTools>
      <ToolPair>
        <button aria-label="Add track"><Icon w={16} h={16}><path d="M8 1V15M1 8H15" stroke="#fff" strokeWidth="4" /></Icon></button>
        <button aria-label="Track presets"><Icon w={20} h={16}><path d="M4 1H12L16 7H9V13H4L0 7Z" fill="#fff" /><path d="M10 9.500H20M10 14H20" stroke="#fff" strokeWidth="2.500" /></Icon></button>
      </ToolPair>
      <TrackCount>21 / 42</TrackCount>
      <ToolPair>
        <button aria-label="Divide list"><Icon w={18} h={16}><path d="M1 1H17V15H1ZM1 5.700H17M1 10.300H17" fill="none" stroke="#fff" strokeWidth="2" /></Icon></button>
        <button aria-label="Find track"><Icon w={18} h={18}><circle cx="11" cy="7" r="5" fill="none" stroke="#fff" strokeWidth="2" /><path d="M7.500 10.500L1.500 16.500" stroke="#fff" strokeWidth="2.500" /></Icon></button>
      </ToolPair>
    </TrackTools>
    <Row $h={55}>
      <ColorTab $c="#d5e94f"><ChordGlyph /></ColorTab>
      <RowLeft><Cluster><Key $narrow>m</Key></Cluster></RowLeft>
      <RowRight>
        <RowTitle><span>コードトラック</span><span>(v1)</span></RowTitle>
        <RowTools>
          <Cluster><Key $narrow aria-label="Acoustic feedback"><Dot /></Key></Cluster>
          <Cluster $bright><Key $narrow aria-label="Auto scales"><Icon w={16} h={12}><path d="M1 11L10 1" stroke="currentColor" strokeWidth="2.500" strokeDasharray="4 1" /><path d="M8 7H15L11.500 11Z" fill="currentColor" /></Icon></Key></Cluster>
          <Cluster $blue><Key $narrow aria-label="Resolve conflicts"><Icon w={22} h={14}><path d="M1 1.500H12V7H1ZM9 7H21V12.500H9Z" fill="none" stroke="currentColor" strokeWidth="1.500" /></Icon></Key></Cluster>
          <MonitorSelect aria-label="Monitored tracks"><option>モニターし...ラックを使用</option></MonitorSelect>
        </RowTools>
      </RowRight>
    </Row>
    <Split />
    <Row $h={52} $line>
      <ColorTab $c="#5d80ea" />
      <RowLeft><span /><Thumbnail $w={110} $h={38} $gap={14} /></RowLeft>
    </Row>
    <Row $h={190} $line>
      <ColorTab $c="#35e05c"><Bars /><span>9</span></ColorTab>
      <RowLeft><MuteSolo /><Thumbnail $w={84} $h={85} $gap={11} /></RowLeft>
      <RowRight>
        <RowTitle>Pad</RowTitle>
        <RowTools>
          <Cluster><Key><Dot /></Key><Key><Speaker /></Key></Cluster>
          <Cluster><Key><EditIcon size={14} /></Key><Key><Bars size={16} /></Key></Cluster>
          <Cluster><Key $narrow><Delay /></Key></Cluster>
        </RowTools>
      </RowRight>
    </Row>
    <Row $h={83} $line>
      <ColorTab $c="#a056ee"><Keys size={20} /><span>10</span></ColorTab>
      <RowLeft><MuteSolo /><Thumbnail $w={35} $h={35} $gap={4} /></RowLeft>
      <RowRight>
        <RowTitle>Chord</RowTitle>
        <RowTools>
          <Cluster><Key><Dot /></Key><Key><Speaker /></Key></Cluster>
          <Cluster><Key><EditIcon size={14} /></Key><Key><Keys size={14} /></Key></Cluster>
          <Cluster><Key $narrow><Delay /></Key></Cluster>
          <Cluster><Key $narrow><Slide /></Key></Cluster>
        </RowTools>
      </RowRight>
    </Row>
    <Row $selected>
      <ColorTab $c="#a056ee"><WaveGlyph /><span>11</span></ColorTab>
      <RowLeft><MuteSolo light /><Thumbnail $w={122} $h={48} $gap={0} $light /></RowLeft>
      <RowRight>
        <RowTitle $dark>Chord (R)</RowTitle>
        <RowTools>
          <Cluster $light><Key $rec><Dot /></Key><Key><Speaker /></Key></Cluster>
          <Cluster $light><Key><EditIcon size={14} /></Key><Key><Linked /></Key></Cluster>
          <Cluster $light><Key $narrow><Padlock /></Key></Cluster>
          <Cluster $light><Key>R</Key><Key>W</Key></Cluster>
        </RowTools>
      </RowRight>
    </Row>
    <TrackFoot><span>-</span><Down w={13} h={7} /><Gear size={18} /></TrackFoot>
  </TrackPane>
);

type Tag = { x: number; w: number; row: number; root: string; mark?: string; tail?: string };
const chordTags = bars.slice(0, 7).flatMap(({ x, n }) => {
  const last = n === 57;
  const tags: Tag[] = [
    { x: x - 19, w: 19, row: 0, root: "D", mark: "♭" },
    { x: x + 1, w: last ? 44 : 41, row: 0, root: "C", mark: "♯", tail: "min" },
  ];
  if (!last) {
    tags.push({ x: x + 43, w: 14, row: 0, root: "C" });
    tags.push({ x: x + 22, w: 19, row: 1, root: "A", mark: "♭" });
  }
  return tags;
});

const Arrangement = () => (
  <Timeline>
    <Canvas>
      <Ruler>
        <Range $ruler style={{ width: at(RANGE_END) }}><RangeEnd /></Range>
        {bars.map(b => <BarMark key={b.n} $dark={b.x < RANGE_END} style={{ left: at(b.x) }}>{b.n}</BarMark>)}
      </Ruler>
      <Lane $h={55}>
        <Grid />
        {chordTags.map((t, i) => (
          <ChordTag key={i} $row={t.row} style={{ left: at(t.x), width: t.w }}>
            {t.root}{t.mark && <sub>{t.mark}</sub>}{t.tail && <small>{t.tail}</small>}
          </ChordTag>
        ))}
      </Lane>
      <Split />
      <Lane $h={52} $line>
        <Grid />
        <Clip $c="#5d80ea" $hi="#8aa6f6" $top={0} $bottom={2} style={{ left: at(203), width: at(164) }}>
          <svg viewBox="0 0 164 48" preserveAspectRatio="none"><ClipLines from={203} to={367} h={48} c="#2e5bd8" /><rect x="160" width="2" height="48" fill="#2e5bd8" /></svg>
        </Clip>
      </Lane>
      <Lane $h={190} $line>
        <Grid />
        <Clip $open $c="#35e05c" $hi="#6ff58c" $top={2} $bottom={1} style={{ left: 0, width: at(561) }}>
          <svg viewBox="0 0 561 185" preserveAspectRatio="none">
            <ClipLines from={0} to={561} h={162} y={23} c="#1fb344" />
            {padHigh.map(([a, b]) => <rect key={a} x={a} y="62" width={b - a} height="9" fill="#157a2e" />)}
            {padLow.map(([a, b]) => <rect key={a} x={a} y="110" width={b - a} height="10" fill="#157a2e" />)}
          </svg>
          <ClipTitle>ica - Music Texture 16 G# Cluster Detuned</ClipTitle>
        </Clip>
      </Lane>
      <Lane $h={83} $line>
        <Grid />
        <Clip $open $c="#a056ee" $hi="#bd80fb" $top={3} $bottom={2} style={{ left: 0, width: at(530) }}>
          <svg viewBox="0 0 530 76" preserveAspectRatio="none">
            <ClipLines from={0} to={530} h={76} c="#7a2fd0" />
            {[-1, ...hits].map(i => voicings[(i + 4) % 4].map((y, k) => (
              <rect key={`${i}-${k}`} x={hitX(i) - 2} y={y - 2} width={k ? 5 : 4} height="4" fill="#5a149c" />
            )))}
          </svg>
        </Clip>
      </Lane>
      <Lane>
        <Grid />
        <Clip $open $c="#a056ee" $hi="#bd80fb" $top={3} $bottom={0} style={{ left: 0, width: at(530) }}>
          <svg viewBox="0 0 530 180" preserveAspectRatio="none">
            <ClipLines from={0} to={530} h={180} c="#7a2fd0" />
            <path d="M0 66.500H527" stroke="#26063f" strokeWidth="1.500" />
            {[-1, ...hits].map(i => (
              <path key={i} d={spike(hitX(i) - 1, 66.5) + spike(hitX(i) - 1, 197)} fill="#5a109c" stroke="#1c0530" strokeWidth="1" />
            ))}
          </svg>
        </Clip>
      </Lane>
      <Playhead style={{ left: at(241) }} />
    </Canvas>
    <TimelineFoot>
      <ScrollTrack $line="#7f8082"><ScrollThumb style={{ width: "46.6%", marginLeft: "1.9%" }} /></ScrollTrack>
      <FootTools>
        <Down w={10} h={5} />
        <span>−</span>
        <ZoomX type="range" min={0} max={100} defaultValue={14} aria-label="Horizontal zoom" />
        <span>+</span>
      </FootTools>
    </TimelineFoot>
  </Timeline>
);

const ZoomColumn = () => (
  <ZoomPane>
    <ZoomMenu aria-label="Zoom presets"><Down w={10} h={5} /></ZoomMenu>
    <Mark><path d="M6 31V43" stroke="currentColor" /><path d="M1 91L11 84" stroke="currentColor" strokeWidth="2" /></Mark>
    <ZoomY $h={66} type="range" min={0} max={100} defaultValue={3} aria-label="Waveform zoom" />
    <ScrollY />
    <Down w={10} h={5} />
    <span>−</span>
    <ZoomY $h={75} type="range" min={0} max={100} defaultValue={84} aria-label="Vertical zoom" />
    <span>+</span>
  </ZoomPane>
);

const lowerTabs = ["MixConsole", "エディター", "サンプラーコントロール", "コードパッド"];

export default function App() {
  return (
    <Page>
      <GlobalStyle />
      <InspectorPanel />
      <Main>
        <Project>
          <TrackList />
          <Arrangement />
          <ZoomColumn />
        </Project>
        <MixerWrap>
          <Mixer>
            <MixerSide>
              <MoreDots aria-label="Channel view options"><i /><i /><i /></MoreDots>
              <ViewButton $on aria-label="Faders"><Icon w={16} h={20}><path d="M4 1V19M12 1V19M1 7H7M9 13H15" stroke="currentColor" strokeWidth="2" /></Icon></ViewButton>
              <ViewButton aria-label="Inserts"><Icon w={20} h={16}><path d="M0 8H15M5 5.500V2H14V5.500M5 10.500V14H14V10.500" fill="none" stroke="currentColor" strokeWidth="2" /><circle cx="18" cy="8" r="1.300" fill="currentColor" /></Icon></ViewButton>
              <ViewButton aria-label="Sends"><Icon w={20} h={20}><path d="M5 1H15V14H5ZM10 14V18" fill="none" stroke="currentColor" strokeWidth="2" /><path d="M0 18.500H20" stroke="currentColor" strokeWidth="3" /></Icon></ViewButton>
              <Notch><Icon w={11} h={20}><path d="M1 0V2L9 10L1 18V20" fill="none" stroke="#f2f2f2" strokeWidth="2" /></Icon></Notch>
            </MixerSide>
            <MixerBody>
              <Strips>{channels.map(c => <ChannelStrip key={c.n} c={c} />)}</Strips>
              <MixerScroll>
                <ScrollTrack $line="#6d6d70"><ScrollThumb style={{ marginLeft: "18.2%" }} /></ScrollTrack>
              </MixerScroll>
            </MixerBody>
          </Mixer>
          <Highlight />
        </MixerWrap>
        <LowerTabs>
          <CloseTab aria-label="Close lower zone"><Icon w={14} h={14}><path d="M2 2L12 12M12 2L2 12" stroke="#bdbdbf" strokeWidth="3" /></Icon></CloseTab>
          {lowerTabs.map((t, i) => <LowerTab key={t} $active={i === 0}>{t}</LowerTab>)}
          <CloseTab $far aria-label="Set up tabs"><Gear size={18} /></CloseTab>
        </LowerTabs>
      </Main>
    </Page>
  );
}
